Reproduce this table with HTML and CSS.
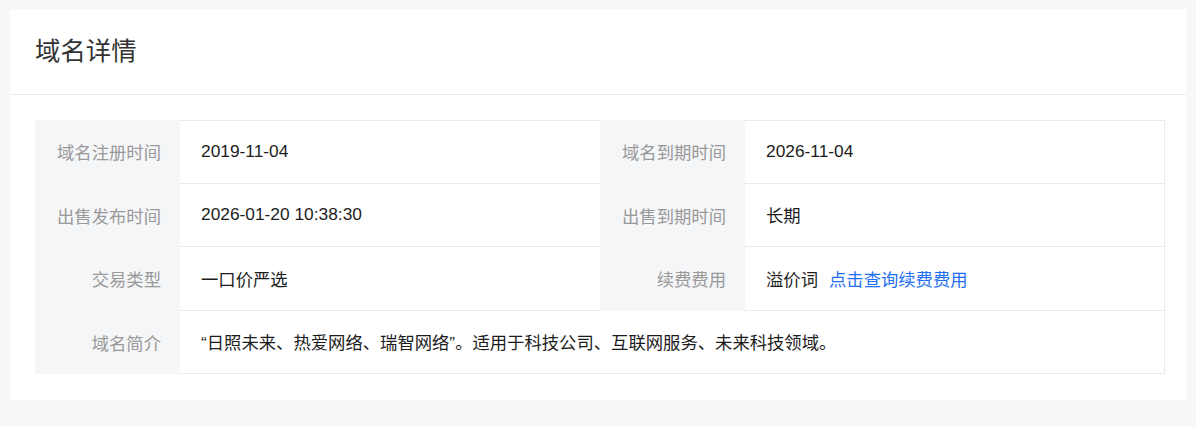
FILE: index.html
```html
<!DOCTYPE html>
<html lang="zh-CN">
<head>
<meta charset="utf-8">
<title>域名详情</title>
<link rel="stylesheet" href="styles.css">
</head>
<body>
<div class="card">
  <div class="card-header">
    <h2 class="card-title">域名详情</h2>
  </div>
  <div class="card-body">
    <div class="info-grid">
      <div class="label">域名注册时间</div>
      <div class="value first">2019-11-04</div>
      <div class="label">域名到期时间</div>
      <div class="value first last-col">2026-11-04</div>

      <div class="label">出售发布时间</div>
      <div class="value">2026-01-20 10:38:30</div>
      <div class="label">出售到期时间</div>
      <div class="value last-col">长期</div>

      <div class="label">交易类型</div>
      <div class="value">一口价严选</div>
      <div class="label">续费费用</div>
      <div class="value last-col">溢价词<a class="link" href="#">点击查询续费费用</a></div>

      <div class="label">域名简介</div>
      <div class="value wide last-col bottom">“日照未来、热爱网络、瑞智网络”。适用于科技公司、互联网服务、未来科技领域。</div>
    </div>
  </div>
</div>
</body>
</html>
```
FILE: styles.css
```css
* {
  box-sizing: border-box;
}
html, body {
  margin: 0;
  padding: 0;
}
body {
  background: #f7f7f7;
  padding: 9px 10px;
  font-family: "Liberation Sans", "Noto Sans CJK SC", sans-serif;
}
.card {
  background: #ffffff;
  width: 1176px;
}
.card-header {
  height: 86px;
  padding: 0 25px;
  border-bottom: 1px solid #ebebeb;
  display: flex;
  align-items: center;
}
.card-title {
  margin: 0;
  font-size: 25.4px;
  font-weight: normal;
  color: #333333;
  line-height: 1;
  padding-top: 1px;
}
.card-body {
  padding: 25px 21px 26px 25px;
}
.info-grid {
  display: grid;
  grid-template-columns: 145px 420px 145px 420px;
  grid-auto-rows: 63.5px;
  font-size: 17.33px;
}
.label {
  background: #f5f6f8;
  color: #999999;
  display: flex;
  align-items: center;
  justify-content: flex-end;
  padding-right: 19px;
}
.value {
  color: #1c1c1c;
  display: flex;
  align-items: center;
  padding-left: 21px;
  border-bottom: 1px solid #ebebeb;
}
.value.first {
  border-top: 1px solid #ebebeb;
}
.value.last-col {
  border-right: 1px solid #ebebeb;
}
.value.wide {
  grid-column: 2 / 5;
}
.link {
  color: #1f6ff2;
  text-decoration: none;
  margin-left: 11px;
}
```
